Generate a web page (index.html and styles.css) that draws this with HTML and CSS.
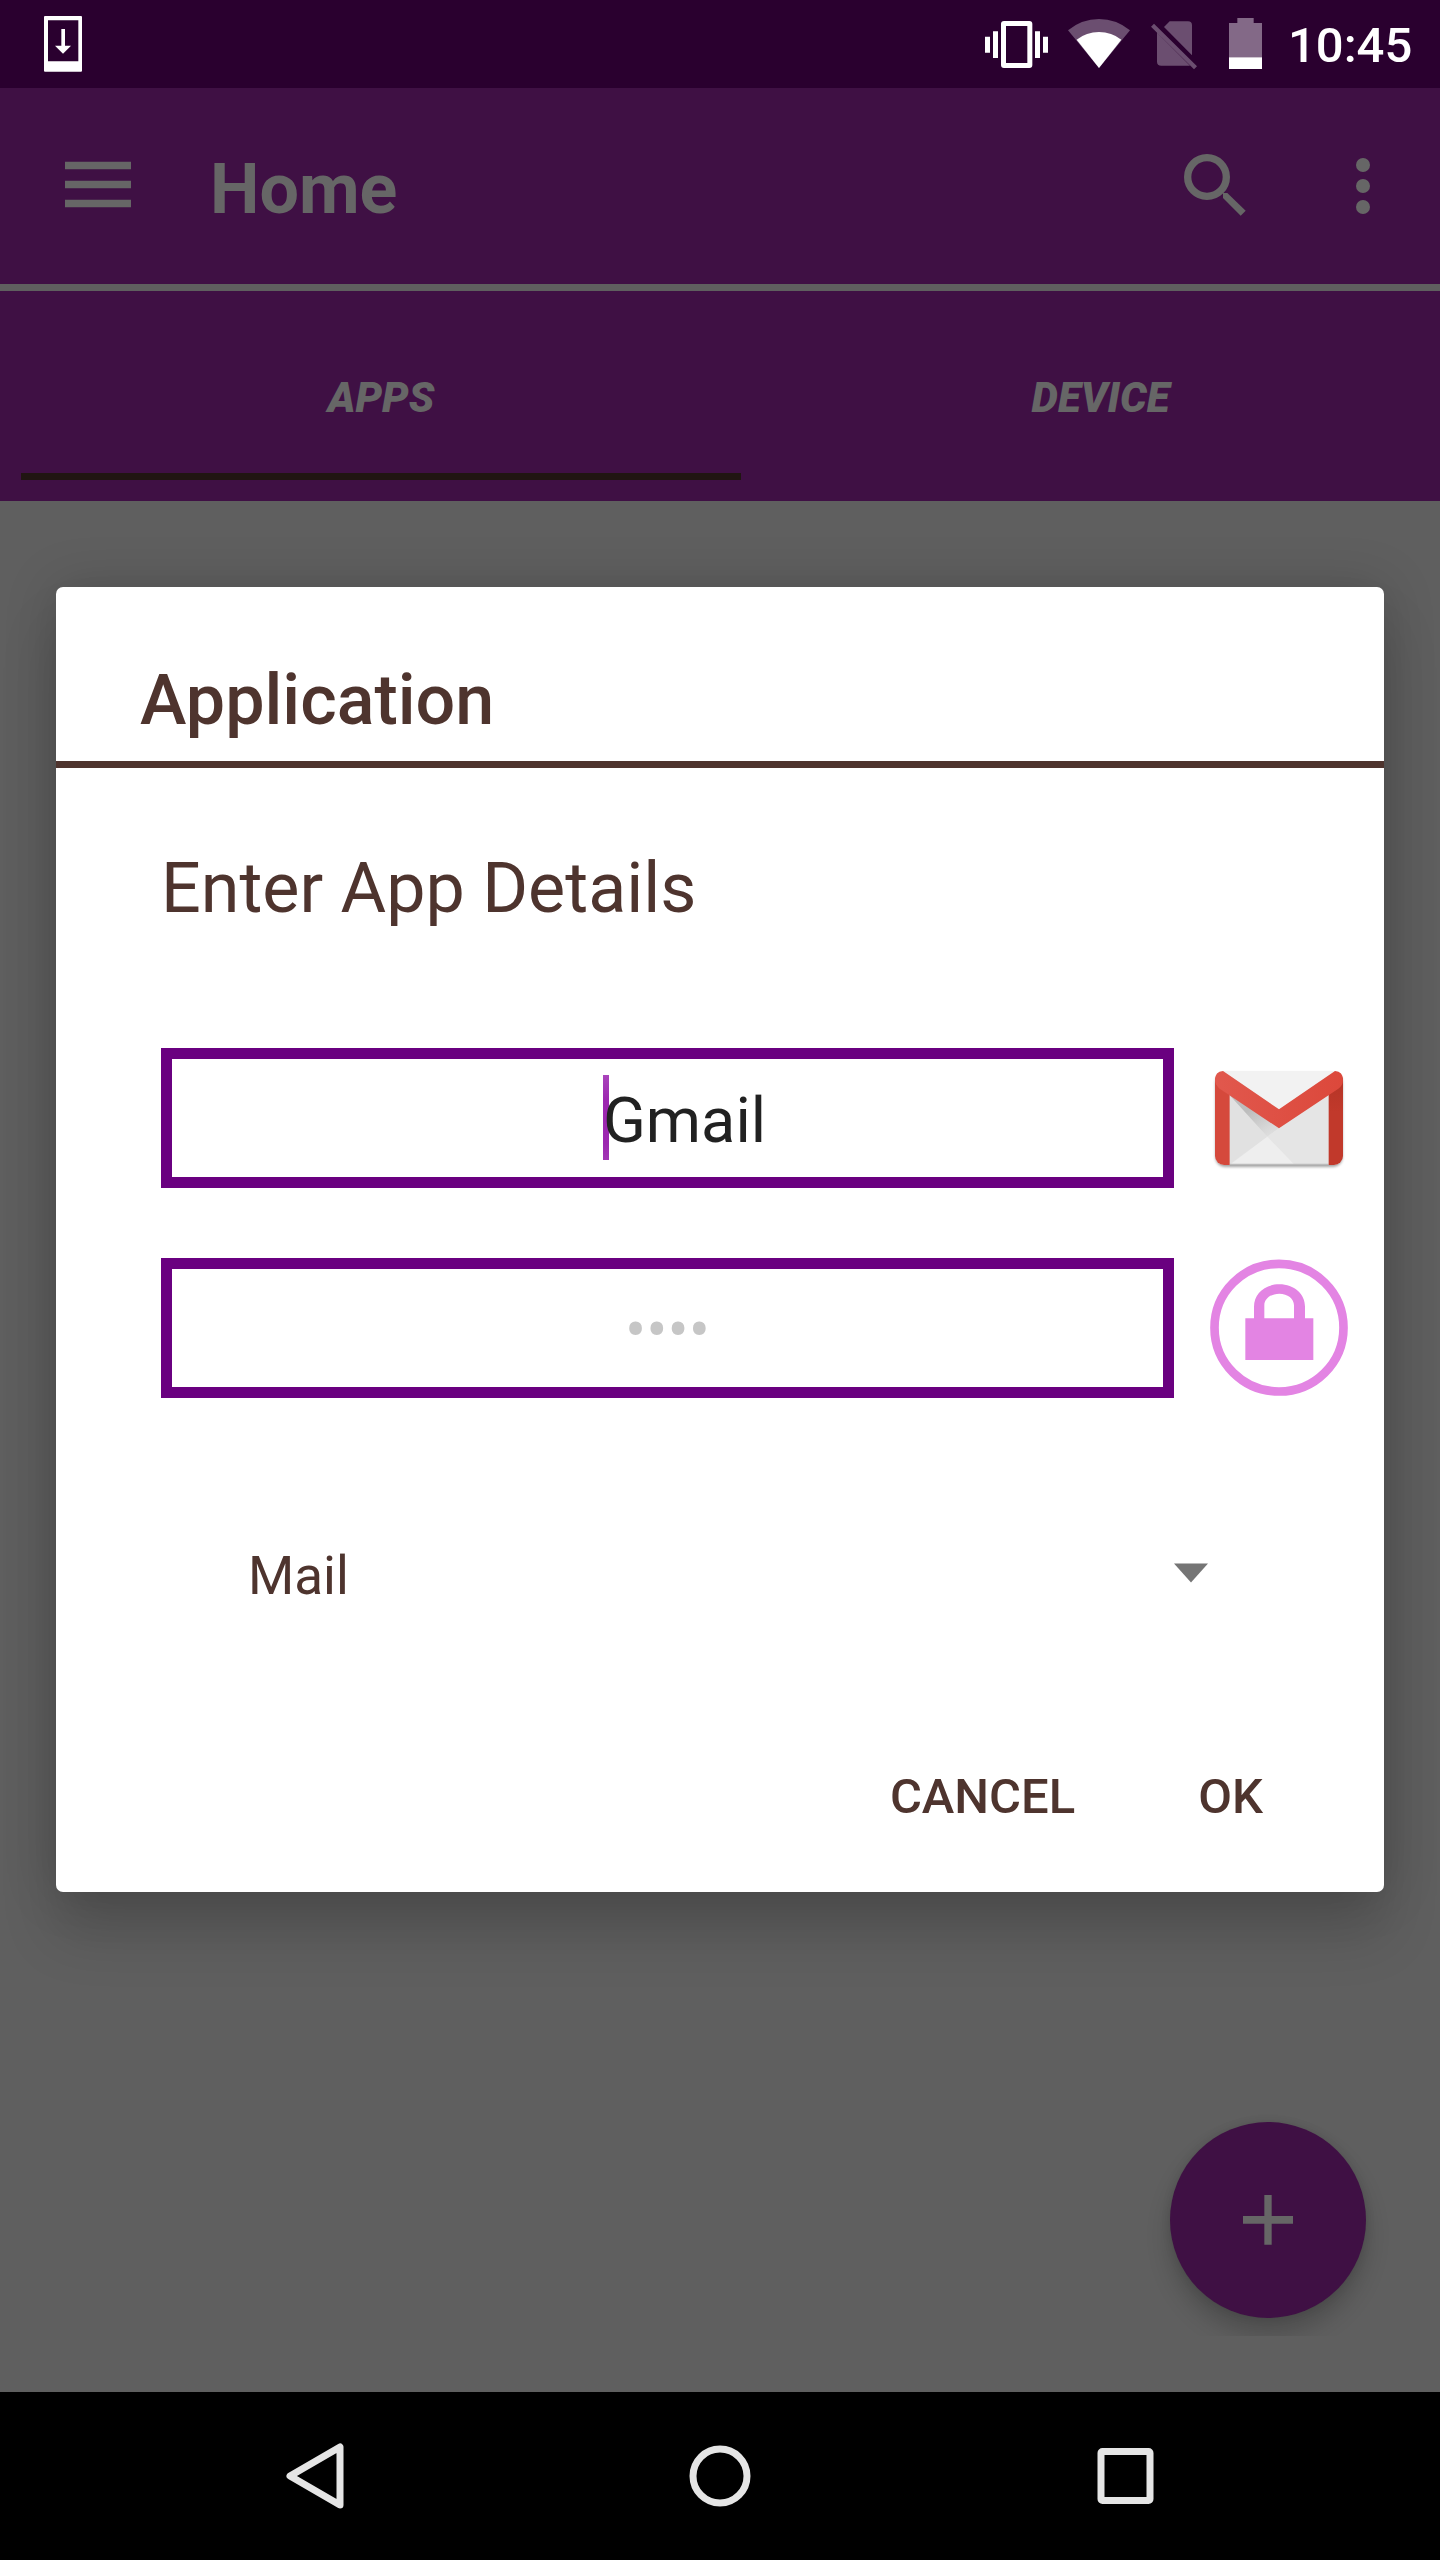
FILE: index.html
```html
<!DOCTYPE html>
<html lang="en">
<head>
<meta charset="utf-8">
<title>Home</title>
<link rel="stylesheet" href="styles.css">
</head>
<body>
<div class="screen">
  <header class="status">
    <svg class="status-download" width="40" height="88" viewBox="129 0 120 264"><path fill="#fff" fill-rule="evenodd" d="M135 48H243Q246 48 246 51V212Q246 215 243 215H135Q132 215 132 212V51Q132 48 135 48ZM144 61V184H235V61Z"/><path fill="#fff" d="M184 87H195V137H213L189 161L165 137H184Z"/></svg>
    <div class="status-right">
      <svg class="i-vibrate" width="63" height="88" viewBox="75 0 189 264"><g fill="#fff"><path fill-rule="evenodd" d="M132 63H208Q217 63 217 72V195Q217 204 208 204H132Q123 204 123 195V72Q123 63 132 63ZM138 78V189H202V78Z"/><path d="M75 110H90V158H75ZM99 94H114V174H99ZM225 94H240V174H225ZM249 110H264V158H249Z"/></g></svg>
      <svg class="i-wifi" width="62" height="88" viewBox="324 0 186 264"><path fill="#6b4e70" d="M324 91Q365 57 417 57Q469 57 510 91L417 204Z"/><path fill="#fff" d="M350 119Q379 96 417 96Q455 96 484 119L417 204Z"/></svg>
      <svg class="i-sim" width="46" height="88" viewBox="573 0 138 264"><path fill="#6b4e70" d="M629 64H684Q696 64 696 76V166L612 81ZM591 98L690 197H604Q591 197 591 185ZM573 80L582 71L711 199L702 208Z"/></svg>
      <svg class="i-battery" width="33" height="88" viewBox="807 0 99 264"><path fill="#836987" d="M832 54H881V69H906V172H807V69H832Z"/><path fill="#fff" d="M807 172H906V207H807Z"/></svg>
      <span class="clock">10:45</span>
    </div>
  </header>
  <div class="toolbar">
    <svg class="i-menu" width="66" height="196" viewBox="195 264 198 588"><path fill="#666" d="M195 485H393V508H195ZM195 542H393V565H195ZM195 599H393V622H195Z"/></svg>
    <h1 class="toolbar-title">Home</h1>
    <svg class="i-search" width="62" height="196" viewBox="672 264 186 588"><circle cx="741" cy="531" r="58" fill="none" stroke="#666" stroke-width="22"/><path fill="#666" d="M789 579H802L857 632L842 647L789 594Z"/></svg>
    <svg class="i-more" width="14" height="196" viewBox="1188 264 42 588"><g fill="#666"><circle cx="1209" cy="495" r="21"/><circle cx="1209" cy="558" r="21"/><circle cx="1209" cy="621" r="21"/></g></svg>
  </div>
  <nav class="tabs">
    <div class="tab tab-active">APPS</div>
    <div class="tab">DEVICE</div>
  </nav>
  <main class="content">
    <div class="fab-clip"><button class="fab" aria-label="Add"><svg width="50" height="50" viewBox="0 0 150 150"><path fill="#666" d="M64 0H86V63H150V86H86V149H64V86H0V63H64Z"/></svg></button></div>
  </main>
  <footer class="navbar">
    <svg width="58" height="66" viewBox="0 0 58 66"><path fill="none" stroke="#e5e5e5" stroke-width="7" stroke-linejoin="round" d="M54 4V62L4 33Z"/></svg>
    <svg width="62" height="62" viewBox="0 0 62 62"><circle cx="31" cy="31" r="27" fill="none" stroke="#e5e5e5" stroke-width="7"/></svg>
    <svg width="58" height="58" viewBox="0 0 58 58"><rect x="5" y="4.500" width="49" height="49" rx="1.500" fill="none" stroke="#e5e5e5" stroke-width="7"/></svg>
  </footer>

  <section class="dialog">
    <h2 class="dialog-title">Application</h2>
    <div class="dialog-body">
      <p class="prompt">Enter App Details</p>
      <div class="row">
        <div class="field"><span class="caret-text">Gmail</span></div>
        <svg width="138" height="140" viewBox="180 54 414 420">
          <defs>
            <linearGradient id="fold" x1="0" y1="0" x2="1" y2="0"><stop offset="0" stop-color="#e1584d"/><stop offset="1" stop-color="#dc483b"/></linearGradient>
            <linearGradient id="right" x1="0" y1="0" x2="0" y2="1"><stop offset="0" stop-color="#b33426"/><stop offset=".4" stop-color="#c1392b"/><stop offset="1" stop-color="#c1392b"/></linearGradient>
            <linearGradient id="shade" gradientUnits="userSpaceOnUse" x1="330" y1="220" x2="400" y2="330"><stop offset="0" stop-color="#bdbdbd"/><stop offset=".6" stop-color="#d9d9d9"/><stop offset="1" stop-color="#e6e6e6"/></linearGradient>
            <filter id="soft" x="-10%" y="-10%" width="120%" height="130%"><feGaussianBlur stdDeviation="4"/></filter>
            <clipPath id="envelope"><rect x="195" y="123" width="384" height="282" rx="27"/></clipPath>
          </defs>
          <rect x="197" y="130" width="380" height="280" rx="27" fill="#000" opacity=".4" filter="url(#soft)"/>
          <g clip-path="url(#envelope)">
            <path fill="#e7e7e7" d="M195 123H579V405H195Z"/>
            <path fill="#e1e1e1" d="M239 196L352 320L239 403Z"/>
            <path fill="url(#shade)" d="M239 196L352 320L387 295L535 196L387 240Z"/>
            <path fill="#e5e5e5" d="M352 320L387 295L536 196V405H434Z"/>
            <path fill="#eee" d="M239 405L352 320L434 405Z"/>
            <path fill="#f2f2f2" d="M215 120H560L387 240Z"/>
            <path fill="#bbb" d="M239 401H536V405H239Z"/>
            <path fill="#d5493c" d="M195 140L239 190V405H195Z"/>
            <path fill="url(#right)" d="M579 140L536 190V405H579Z"/>
            <path fill="#b8392d" d="M197 165L239 196V184ZM577 168L536 196V184Z"/>
          </g>
          <path fill="url(#fold)" d="M195 150Q195 124 219 123L387 238L555 123Q579 124 579 150Q579 166 565 176L387 295L209 176Q195 165 195 150Z"/>
        </svg>
      </div>
      <div class="row row-password">
        <div class="field field-password">••••</div>
        <svg width="138" height="140" viewBox="180 684 414 420"><ellipse cx="387" cy="893" rx="193.500" ry="191.500" fill="none" stroke="#e384e3" stroke-width="26"/><path fill="#e384e3" fill-rule="evenodd" d="M312 865V830C312 792 343 763 388 763S465 792 465 830V865H490V990H286V865ZM343 865H432V826C432 806 413 791 388 791S343 806 343 826Z"/></svg>
      </div>
      <div class="spinner"><span>Mail</span><svg width="34" height="20" viewBox="0 0 34 20"><path fill="#757575" d="M0 .5H34L17 19.500Z"/></svg></div>
      <div class="actions"><span>CANCEL</span><span>OK</span></div>
    </div>
  </section>
</div>
</body>
</html>
```
FILE: styles.css
```css
* { box-sizing: border-box; }
body { margin: 0; font-family: Roboto, "Liberation Sans", sans-serif; }
h1, h2, p { margin: 0; }
svg { display: block; flex: none; }

.screen { position: relative; display: flex; flex-direction: column; width: 1440px; height: 2560px; overflow: hidden; background: #5f5f5f; }

.status { display: flex; justify-content: space-between; height: 88px; padding: 0 27px 0 43px; background: #2a002f; }
.status-right { display: flex; }
.i-wifi { margin-left: 20px; }
.i-sim { margin-left: 21px; }
.i-battery { margin-left: 32px; }
.clock { width: 125px; margin-left: 26px; color: #fff; font-size: 49px; font-weight: 500; line-height: 92px; white-space: nowrap; }

.toolbar { display: flex; height: 196px; padding: 0 70px 0 65px; background: #3f1044; }
.toolbar-title { flex: 1; margin-left: 79px; color: #666; font-size: 70px; font-weight: 700; line-height: 202px; }
.i-more { margin-left: 110px; }

.tabs { display: flex; height: 217px; padding-left: 21px; border-top: 7px solid #5f5f5f; background: #3f1044; }
.tab { flex: none; width: 719px; height: 189px; color: #666; font-size: 42px; font-weight: 900; font-style: italic; line-height: 213px; text-align: center; }
.tab-active { width: 720px; border-bottom: 7px solid #201512; }

.content { display: flex; flex: 1; justify-content: flex-end; align-items: flex-end; padding: 0 34px 56px 0; }
.fab-clip { padding: 40px 40px 18px; overflow: hidden; }
.fab { display: flex; align-items: center; justify-content: center; width: 196px; height: 196px; padding: 0; border: 0; border-radius: 50%; background: #3f1044; box-shadow: 0 16px 24px rgba(0, 0, 0, .2), 0 0 10px rgba(0, 0, 0, .1); }

.navbar { display: flex; align-items: center; justify-content: space-between; height: 168px; padding: 0 286px; background: #000; }

.dialog { position: absolute; top: 587px; left: 56px; width: 1328px; height: 1305px; border-radius: 7px; background: #fff; color: #4e342e; box-shadow: 0 42px 56px rgba(0, 0, 0, .15), 0 0 52px rgba(0, 0, 0, .17); }
.dialog-title { height: 181px; padding: 72px 84px 0; border-bottom: 7px solid #4e342e; font-size: 70px; font-weight: 500; line-height: 82px; }
.dialog-body { padding: 79px 36px 0 105px; }
.prompt { font-size: 70px; line-height: 82px; }
.row { display: flex; justify-content: space-between; margin-top: 119px; }
.row-password { margin-top: 70px; }
.field { width: 1013px; height: 140px; padding-top: 5px; border: 11px solid #6a0080; color: #212121; font-size: 63px; line-height: 113px; text-align: center; }
.caret-text { display: inline-block; margin-left: 34px; line-height: 91px; background: linear-gradient(#a944bb, #9c27b0 30%, #9c27b0 80%, #a136b4) 0 0 / 6px 85px no-repeat; }
.field-password { color: #c6c6c6; }
.spinner { display: flex; align-items: center; justify-content: space-between; height: 66px; margin-top: 144px; padding: 0 140px 0 87px; font-size: 53px; line-height: 66px; }
.spinner span { padding-top: 2px; }
.spinner svg { margin-bottom: 4px; }
.actions { display: flex; justify-content: flex-end; gap: 123px; margin-top: 160px; padding-right: 85px; font-size: 49px; font-weight: 500; line-height: 58px; }
```
